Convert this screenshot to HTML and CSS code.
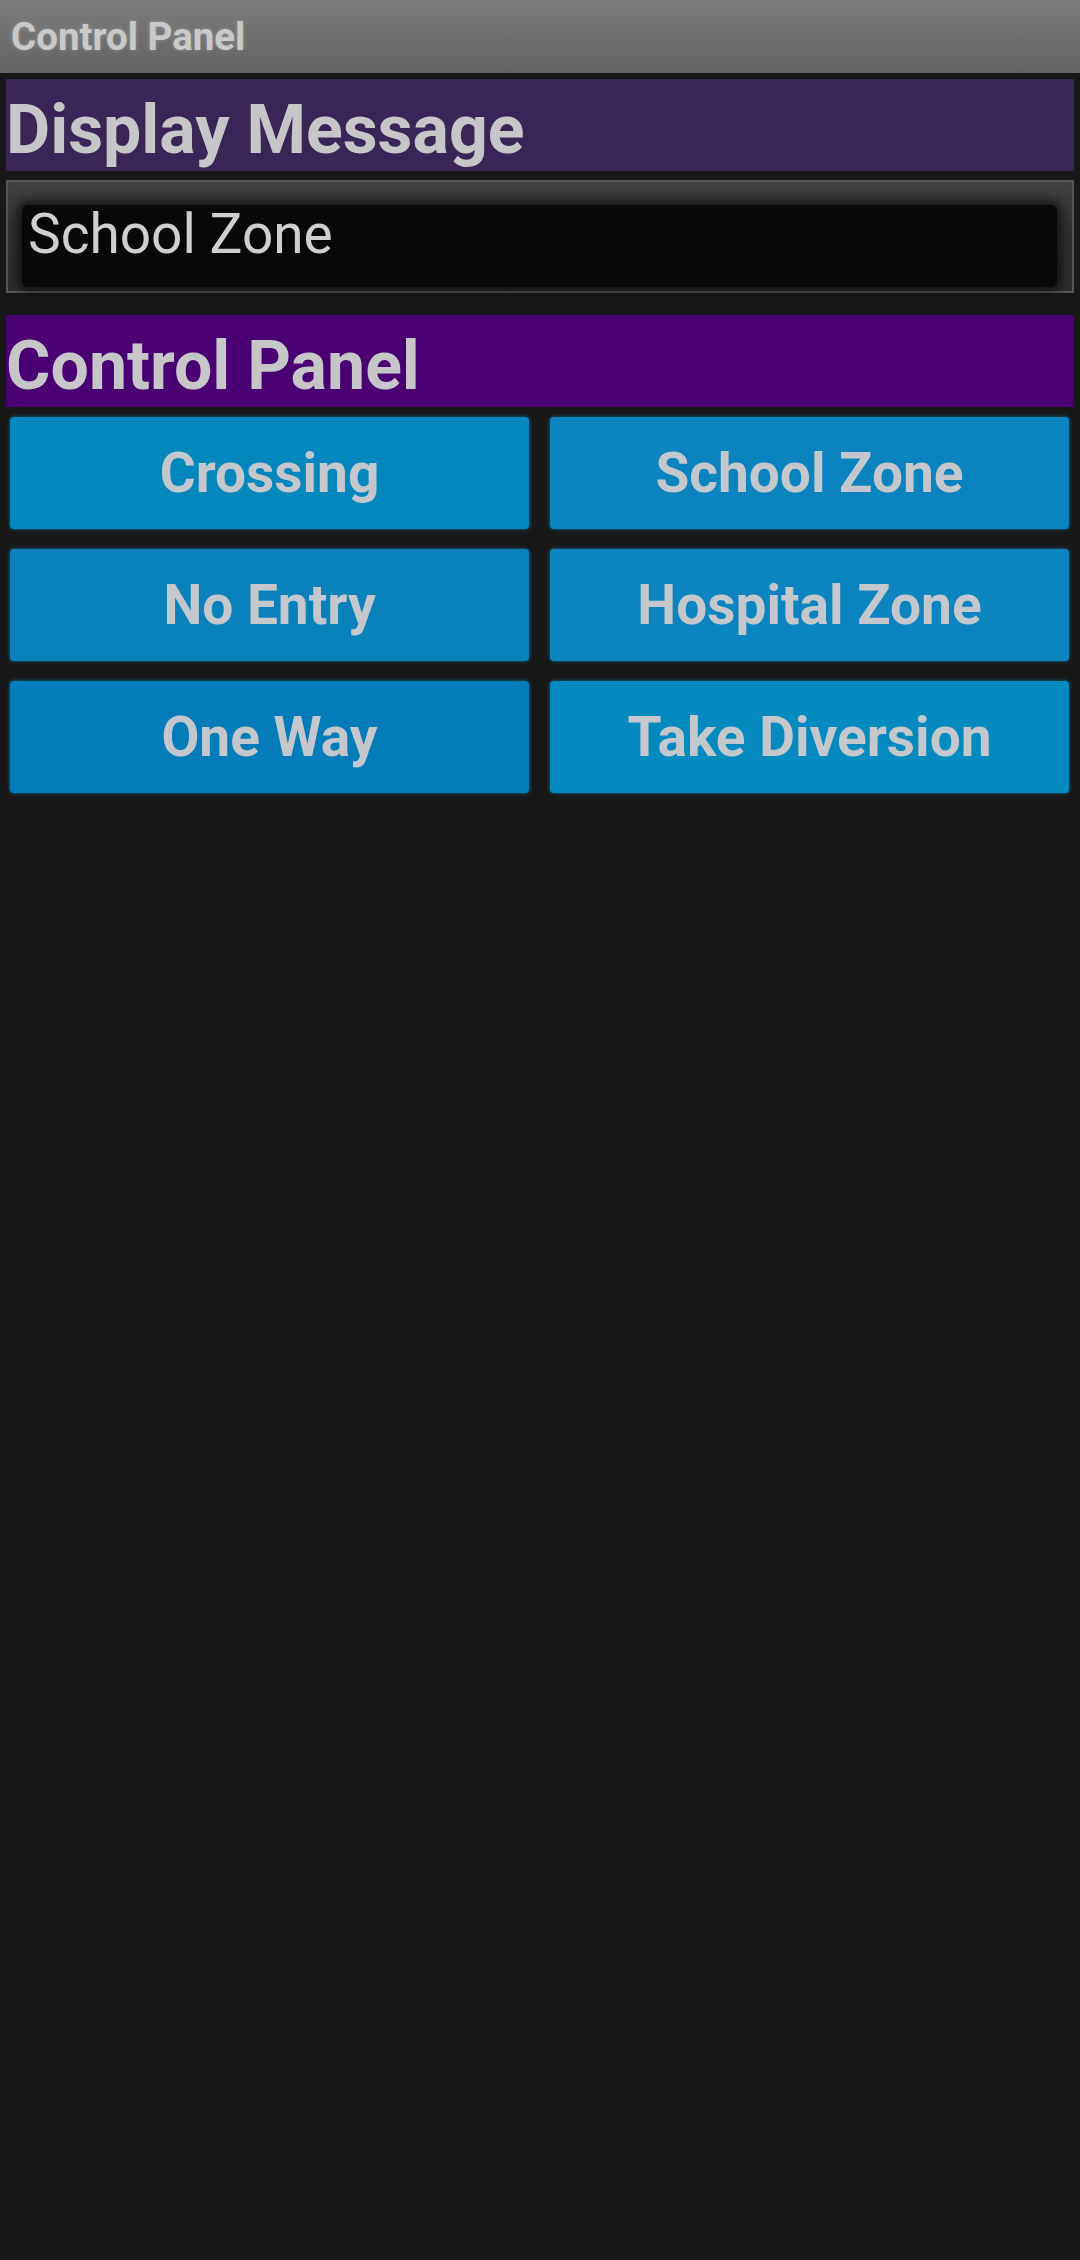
FILE: index.html
```html
<!DOCTYPE html>
<html lang="en">
<head>
<meta charset="utf-8">
<title>Control Panel</title>
<link rel="stylesheet" href="styles.css">
</head>
<body>
<header class="titlebar">Control Panel</header>
<main class="content">
  <h2 class="section section-display">Display Message</h2>
  <div class="display-wrap">
    <div class="display-field">School Zone</div>
  </div>
  <h2 class="section section-control">Control Panel</h2>
  <div class="buttons">
    <button class="btn btn-a">Crossing</button>
    <button class="btn btn-b">School Zone</button>
    <button class="btn btn-c">No Entry</button>
    <button class="btn btn-d">Hospital Zone</button>
    <button class="btn btn-e">One Way</button>
    <button class="btn btn-f">Take Diversion</button>
  </div>
</main>
</body>
</html>
```

FILE: styles.css
```css
* {
  box-sizing: border-box;
}

html, body {
  margin: 0;
  padding: 0;
  background: #181818;
}

body {
  font-family: Roboto, "Liberation Sans", sans-serif;
  color: #c7c7c9;
  min-height: 2260px;
}

.titlebar {
  height: 73px;
  line-height: 73px;
  padding-left: 11px;
  font-size: 38.5px;
  font-weight: 700;
  color: #c9c9c9;
  background: linear-gradient(#7c7c7c, #636363);
  text-shadow: 0 0 4px rgba(255, 255, 255, 0.25);
}

.content {
  padding: 0 6px;
}

.section {
  margin: 0;
  height: 92px;
  padding-top: 10px;
  line-height: 82px;
  font-size: 68px;
  font-weight: 700;
  color: #c6c6c8;
  white-space: nowrap;
}

.section-display {
  margin-top: 6px;
  background: #3a2656;
}

.section-control {
  margin-top: 22px;
  background: #4a0072;
}

.display-wrap {
  margin-top: 9px;
  border: 2px solid #555555;
  padding: 23px 15px 4px 14px;
  background: linear-gradient(#434343, #303030 40%, #2c2c2c);
}

.display-field {
  height: 82px;
  line-height: 58px;
  padding-left: 6px;
  font-size: 55px;
  font-weight: 400;
  color: #cfcfcf;
  background: #080808;
  border-radius: 6px;
  box-shadow: 0 0 10px 5px rgba(0, 0, 0, 0.55);
}

.buttons {
  margin-top: 10px;
  padding: 0 5px 0 4px;
  display: grid;
  grid-template-columns: 1fr 1fr;
  grid-auto-rows: 112px;
  column-gap: 21px;
  row-gap: 20px;
}

.btn {
  border: none;
  margin: 0;
  padding: 0;
  border-radius: 4px;
  font-family: Roboto, "Liberation Sans", sans-serif;
  font-size: 55px;
  font-weight: 700;
  color: #c4c8cc;
  box-shadow: 0 0 3px 1px rgba(20, 120, 160, 0.55);
}

.btn-a { background: #0487bd; }
.btn-b { background: #0b83bf; }
.btn-c { background: #0b81bc; }
.btn-d { background: #0c84bf; }
.btn-e { background: #037cb9; }
.btn-f { background: #048abf; }
```
